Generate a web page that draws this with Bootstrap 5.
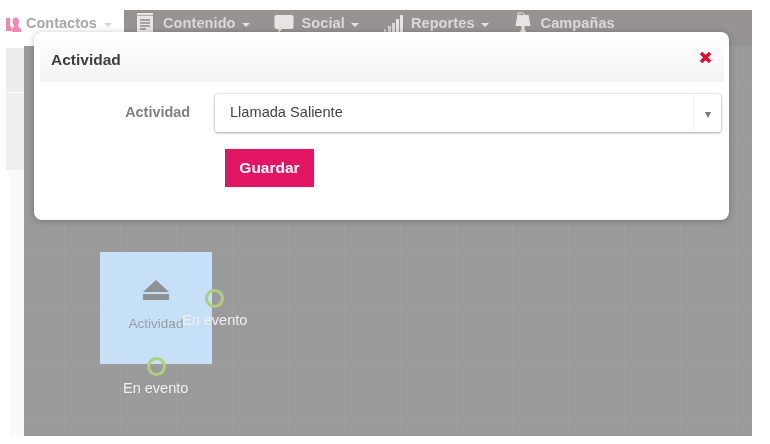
<!DOCTYPE html>
<html lang="es">
<head>
  <meta charset="UTF-8" />
  <title>Actividad</title>
  <link href="https://cdn.jsdelivr.net/npm/bootstrap@5.3.3/dist/css/bootstrap.min.css" rel="stylesheet">
  <style>
    html { background: #fff; }
    body { width: 770px; height: 444px; overflow: hidden; background: #fff; position: relative; font-family: "Liberation Sans", Arial, sans-serif; filter: blur(.4px); }
    .top-area { padding-top: 10px; height: 46px; }
    .brand-area { width: 124px; padding-left: 6px; padding-top: 1px; color: #a9a9a9; font-size: 14.5px; font-weight: 700; height: 27px; }
    .brand-area svg { margin-right: 5px; }
    .brand-area .car { border-top-color: #d6d6d6; margin-left: 7px; }
    .main-nav { width: 628px; height: 36px; background: #979393; color: #dad8d8; font-size: 14.5px; font-weight: 700; letter-spacing: .1px; align-items: flex-start; padding-top: 1px; }
    .nav-entry { height: 26px; }
    .car { display: inline-block; width: 0; height: 0; border: 4px solid transparent; border-top: 4px solid #e4e2e2; border-bottom: 0; margin-left: 6px; margin-top: 1px; }
    .main-nav svg { flex: none; margin-right: 9px; }
    .e1 { margin-left: 13px; }
    .e2 { margin-left: 24px; }
    .e3 { margin-left: 25px; }
    .e4 { margin-left: 26px; }
    .e2 svg, .e3 svg { margin-right: 8px; }
    .e4 svg { margin-right: 10px; }
    .lower-area { height: 390px; }
    .side-strip { width: 24px; }
    .side-a { margin-left: 6px; margin-top: 2px; height: 44px; background: #ededed; }
    .side-b { margin-left: 6px; margin-top: 1px; height: 77px; background: #eeeeee; }
    .side-c { margin-left: 9px; height: 266px; background: #fafafa; }
    .flow-canvas {
      width: 728px; position: relative; background-color: #9a9a9a;
      background-image: linear-gradient(to right, #9f9f9f 1px, transparent 1px), linear-gradient(to bottom, #9f9f9f 1px, transparent 1px);
      background-size: 56px 56px; background-position: 40px 39px;
    }
    .flow-node { position: absolute; left: 76px; top: 206px; width: 112px; height: 112px; background: #c6e0f8; color: #9a9da0; font-size: 13.5px; padding-top: 27px; }
    .flow-node svg { display: block; margin: 0 auto 14px; }
    .flow-node span { display: block; text-align: center; }
    .port { position: absolute; width: 19px; height: 19px; border: 3px solid #adcf7e; border-radius: 50%; }
    .port-r { left: 181px; top: 243px; }
    .port-b { left: 123px; top: 311px; }
    .port-text { position: absolute; color: #f0f0f0; font-size: 14.5px; line-height: 18px; white-space: nowrap; }
    .pt-r { left: 158px; top: 265px; }
    .pt-b { left: 99px; top: 333px; }
    .dlg { position: absolute; left: 34px; top: 32px; width: 695px; height: 188px; padding: 6px 5px 0 6px; background: #fff; border: 0; border-radius: 8px; box-shadow: 0 1px 6px rgba(0,0,0,.25); }
    .dlg .modal-header { height: 44px; padding: 0 11px; border: 0; border-radius: 0; background: linear-gradient(#fff, #f3f3f3); }
    .dlg .modal-title { font-size: 15.5px; font-weight: 700; color: #3f3f3f; }
    .dlg-close { display: flex; margin-right: 1px; margin-top: -5px; }
    .dlg-label { width: 150px; text-align: right; font-size: 14.4px; font-weight: 700; color: #808080; }
    .pick-box { margin-left: 25px; width: 506px; height: 38px; border-radius: 2px; box-shadow: 0 1px 3px rgba(0,0,0,.3), 0 0 2px rgba(0,0,0,.2); font-size: 14.6px; color: #444; background: #fff; }
    .pick-text { padding-left: 15px; }
    .pick-arrow { width: 28px; height: 100%; border-left: 1px solid #f0f0f0; }
    .pick-arrow i { display: block; width: 0; height: 0; border: 3.5px solid transparent; border-top: 6px solid #777; border-bottom: 0; margin-top: 3px; }
    .btn.save-btn { margin-left: 185px; margin-top: 17px; width: 89px; height: 38px; padding: 0; background: #e21563; border: 0; border-radius: 0; color: #fff; font-size: 15.5px; font-weight: 700; }
  </style>
</head>
<body class="m-0">
  <div class="top-area d-flex">
    <div class="brand-area d-flex align-items-center">
      <svg width="15" height="17" viewBox="0 0 17 17" fill="#f585b5"><path d="M0 1h4.500v9l2 2v4H0z"/><ellipse cx="11" cy="5" rx="3.500" ry="4.500"/><path d="M8.500 9h5l1 3 2.500 1.500V17H7v-4l2-2z"/></svg>
      <span>Contactos</span><i class="car"></i>
    </div>
    <nav class="main-nav d-flex">
      <div class="nav-entry e1 d-flex align-items-center">
        <svg width="17" height="22" viewBox="0 0 17 22"><rect x="0" y="0" width="16" height="22" fill="#e6e4e4"/><rect x="0" y="2" width="16" height="1" fill="#aaa"/><path d="M3 7h10M3 10h10M3 13h10M3 16h6" stroke="#8d8a8a" stroke-width="1.300"/></svg>
        <span>Contenido</span><i class="car"></i>
      </div>
      <div class="nav-entry e2 d-flex align-items-center">
        <svg width="20" height="20" viewBox="0 0 20 20"><path d="M2.500 1h15A2 2 0 0 1 19.500 3v10a2 2 0 0 1-2 2H8l-3.500 4v-4h-2a2 2 0 0 1-2-2V3a2 2 0 0 1 2-2z" fill="#e6e4e4"/></svg>
        <span>Social</span><i class="car"></i>
      </div>
      <div class="nav-entry e3 d-flex align-items-center">
        <svg width="19" height="20" viewBox="0 0 19 20" fill="#e6e4e4"><rect x="0" y="15" width="2" height="5" opacity=".6"/><rect x="4" y="12" width="3" height="8" opacity=".7"/><rect x="8" y="9" width="3" height="11" opacity=".85"/><rect x="12" y="5" width="3" height="15"/><rect x="16" y="1" width="3" height="19"/></svg>
        <span>Reportes</span><i class="car"></i>
      </div>
      <div class="nav-entry e4 d-flex align-items-center">
        <svg width="16" height="24" viewBox="0 0 16 24"><path d="M3 3V1h5l2 2" fill="none" stroke="#e6e4e4"/><path d="M2.500 3h11l2 11H.5z" fill="#e6e4e4"/><rect x="6.500" y="14" width="3" height="4" fill="#e6e4e4"/><path d="M3 23l3-5h4l3 5z" fill="#e6e4e4"/></svg>
        <span>Campañas</span>
      </div>
    </nav>
  </div>

  <div class="lower-area d-flex">
    <aside class="side-strip">
      <div class="side-a"></div>
      <div class="side-b"></div>
      <div class="side-c"></div>
    </aside>
    <div class="flow-canvas">
      <div class="flow-node">
        <svg width="26" height="21" viewBox="0 0 26 21" fill="#8f9294"><path d="M13 1l13 12H0z"/><rect x="0" y="15" width="26" height="6"/></svg>
        <span>Actividad</span>
      </div>
      <div class="port port-r"></div>
      <div class="port port-b"></div>
      <div class="port-text pt-r">En evento</div>
      <div class="port-text pt-b">En evento</div>
    </div>
  </div>

  <div class="modal-content dlg">
    <div class="modal-header d-flex justify-content-between align-items-center">
      <h5 class="modal-title">Actividad</h5>
      <span class="dlg-close"><svg width="13" height="13" viewBox="0 0 13 13"><path d="M2 2l9 9M11 2l-9 9" stroke="#e8062a" stroke-width="3.200" fill="none"/></svg></span>
    </div>
    <div class="d-flex align-items-center mt-2 pt-1">
      <label class="dlg-label">Actividad</label>
      <div class="pick-box d-flex align-items-center justify-content-between">
        <span class="pick-text">Llamada Saliente</span>
        <span class="pick-arrow d-flex align-items-center justify-content-center"><i></i></span>
      </div>
    </div>
    <div>
      <button type="button" class="btn save-btn">Guardar</button>
    </div>
  </div>
</body>
</html>
